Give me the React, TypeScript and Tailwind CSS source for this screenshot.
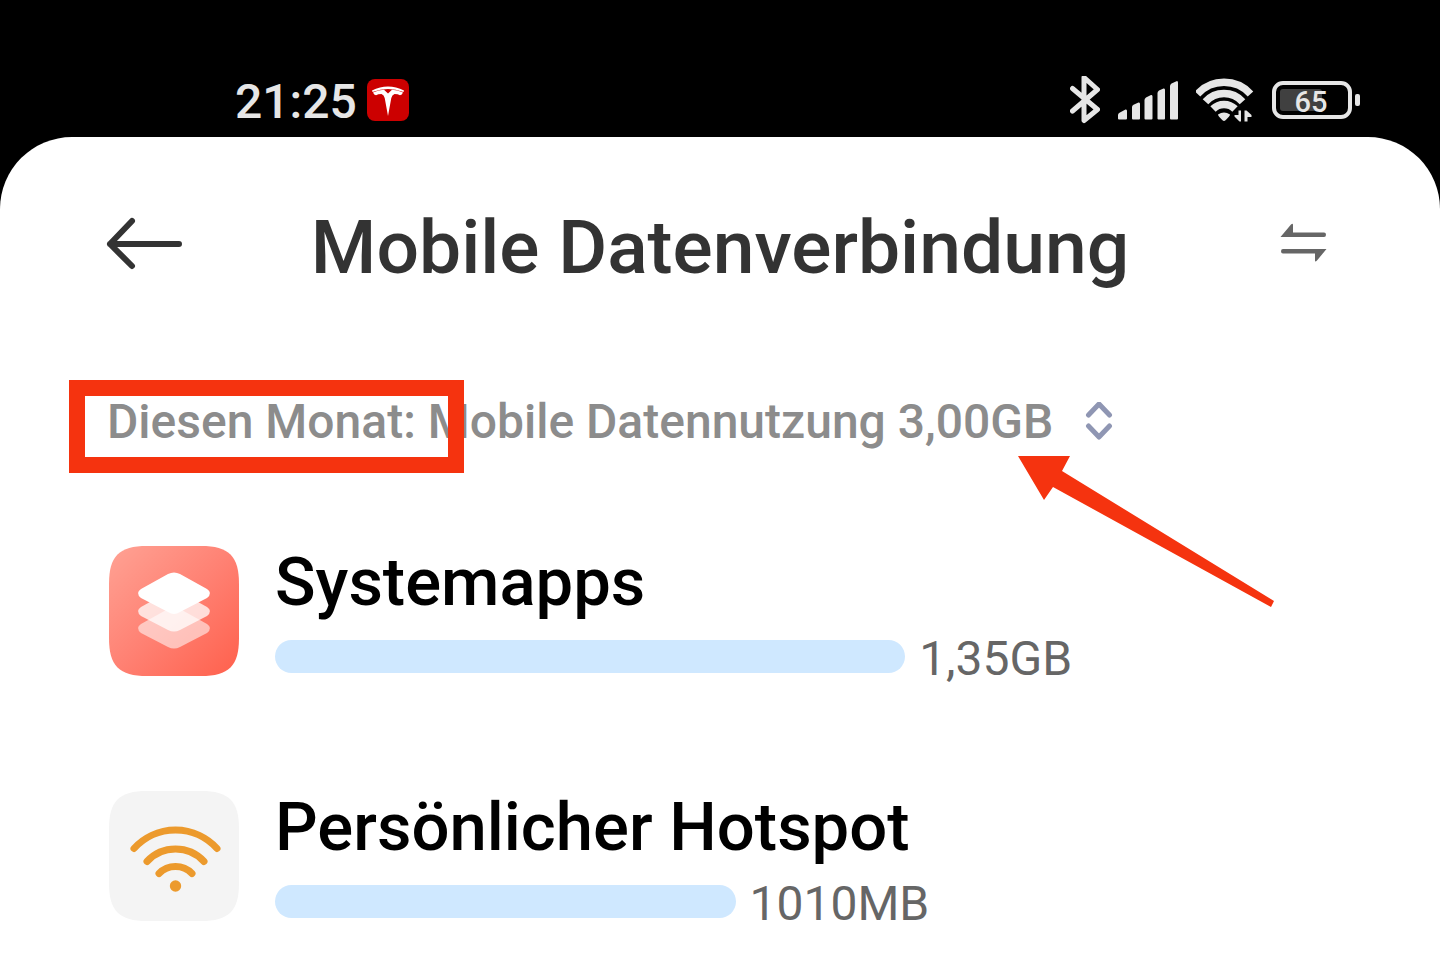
import React from "react";

interface AppUsage {
  id: string;
  name: string;
  usage: string;
  usedMb: number;
  icon: React.ReactNode;
}

// Amount of data that would fill the whole row
const FULL_ROW_MB = 2316;

const TeslaIcon = () => (
  <svg viewBox="0 0 42 42" className="w-[42px] h-[42px]" aria-hidden="true">
    <rect width="42" height="42" rx="8" fill="#cc0000" />
    <path d="M5 11.5Q21 3.5 37 11.5L36.5 13Q21 7 5.5 13Z" fill="#fff" />
    <path
      d="M6 13.5Q11.500 10.800 17 10.800L21 14.500L25 10.800Q30.500 10.800 36 13.500Q35 16 33 16.300Q31 15 27.500 15Q25 16 24.300 19L21 37L17.700 19Q17 16 14.500 15Q11 15 9 16.300Q7 16 6 13.500Z"
      fill="#fff"
    />
  </svg>
);

const BluetoothIcon = () => (
  <svg viewBox="0 0 30 48" className="w-[30px] h-12" fill="none" aria-label="Bluetooth">
    <path
      d="M2.500 12.500L27.500 33.500L14 44.500V1.500L27.500 13.500L2.500 35"
      stroke="#e6e6e6"
      strokeWidth="5"
      strokeLinecap="round"
      strokeLinejoin="round"
    />
  </svg>
);

const SignalIcon = () => (
  <svg viewBox="0 0 60 48" className="w-[60px] h-12" fill="#e6e6e6" aria-label="Mobilfunk">
    <path d="M0 39Q0 37.500 1.500 36.700L7.500 33.500Q9 33 9 35V42.500Q9 43.500 8 43.500H1Q0 43.500 0 42.500Z" />
    <path d="M14 31Q14 29.500 15.500 28.700L20.500 26.500Q22 26 22 28V42.500Q22 43.500 21 43.500H15Q14 43.500 14 42.500Z" />
    <path d="M26.500 24Q26.500 22.500 28 21.500L33 19Q34.500 18.500 34.500 20.500V42.500Q34.500 43.500 33.500 43.500H27.500Q26.500 43.500 26.500 42.500Z" />
    <path d="M39.500 17Q39.500 15.500 41 14.500L45.500 12.500Q47 12 47 14V42.500Q47 43.500 46 43.500H40.500Q39.500 43.500 39.500 42.500Z" />
    <path d="M52 10Q52 8.500 53.500 7.500L58.500 5.200Q60 4.700 60 6.700V42.500Q60 43.500 59 43.500H53Q52 43.500 52 42.500Z" />
  </svg>
);

const StatusWifiIcon = () => (
  <svg viewBox="1 0 58 48" className="w-[58px] h-12" fill="none" aria-label="WLAN">
    <g stroke="#e6e6e6" strokeWidth="7.500">
      <path d="M2.500 18A36 36 0 0 1 55.500 18" />
      <path d="M10.500 25.700A25 25 0 0 1 47.500 25.700" />
      <path d="M18 33A15.500 15.500 0 0 1 40 33" />
    </g>
    <path d="M23 38.500Q29 34.500 35 38.500Q35 40 30.500 44.300Q29 45.500 27.500 44.300Q23 40 23 38.500Z" fill="#e6e6e6" />
    {/* Traffic arrows, cut out of the arcs by a black edge */}
    <path d="M43.500 34.500H46V45.500H44.500L39.500 40.500V39H43.500Z" stroke="#000" strokeWidth="3" />
    <path d="M49.500 34.500H51.500L56.500 39V41H52.500V45.500H49.500Z" stroke="#000" strokeWidth="3" />
    <path d="M43.500 34.500H46V45.500H44.500L39.500 40.500V39H43.500Z" fill="#e6e6e6" />
    <path d="M49.500 34.500H51.500L56.500 39V41H52.500V45.500H49.500Z" fill="#e6e6e6" />
  </svg>
);

const Battery = ({ level }: { level: number }) => (
  <div className="flex items-center gap-[3px]">
    <div className="relative w-20 h-[38px] border-4 border-[#e6e6e6] rounded-[11px] p-1">
      <div className="h-full rounded-[3px] bg-[#404040]" style={{ width: `${level}%` }} />
      <span className="absolute inset-0 flex items-center justify-center text-[29px] leading-[30px] font-medium text-[#e6e6e6] pt-1 pr-0.5">
        {level}
      </span>
    </div>
    <div className="w-[5px] h-3 rounded-[2px] bg-[#e6e6e6]" />
  </div>
);

const SystemAppsIcon = () => (
  <svg viewBox="0 0 130 130" className="w-[130px] h-[130px] shrink-0" aria-hidden="true">
    <defs>
      <linearGradient id="coral" x1="0" y1="0" x2="1" y2="1">
        <stop offset="0" stopColor="#ffa294" />
        <stop offset="0.500" stopColor="#ff8173" />
        <stop offset="1" stopColor="#ff604c" />
      </linearGradient>
    </defs>
    <path
      d="M38 0H92C120 0 130 10 130 38V92C130 120 120 130 92 130H38C10 130 0 120 0 92V38C0 10 10 0 38 0Z"
      fill="url(#coral)"
    />
    <g fill="#fff">
      <path opacity="0.550" d="M59 63Q65 60 71 63L98 78Q104 82 98 87L71 101Q65 104 59 101L32 87Q26 82 32 78Z" />
      <path opacity="0.750" d="M59 46Q65 43 71 46L98 61Q104 65 98 70L71 84Q65 87 59 84L32 70Q26 65 32 61Z" />
      <path d="M59 28Q65 25 71 28L98 43Q104 47 98 52L71 66Q65 70 59 66L32 52Q26 47 32 43Z" />
    </g>
  </svg>
);

const HotspotIcon = () => (
  <svg viewBox="0 0 130 130" className="w-[130px] h-[130px] shrink-0" fill="none" aria-hidden="true">
    <path
      d="M38 0H92C120 0 130 10 130 38V92C130 120 120 130 92 130H38C10 130 0 120 0 92V38C0 10 10 0 38 0Z"
      fill="#f4f4f4"
    />
    <g stroke="#ec9a2d" strokeWidth="7" strokeLinecap="round">
      <path d="M25 57.500A56 56 0 0 1 108 57.500" />
      <path d="M38 70.500A39 39 0 0 1 95 70.500" />
      <path d="M50 82.500A23 23 0 0 1 83 82.500" />
    </g>
    <circle cx="66.500" cy="95" r="5.700" fill="#ec9a2d" />
  </svg>
);

const apps: AppUsage[] = [
  { id: "system", name: "Systemapps", usage: "1,35GB", usedMb: 1382, icon: <SystemAppsIcon /> },
  { id: "hotspot", name: "Persönlicher Hotspot", usage: "1010MB", usedMb: 1010, icon: <HotspotIcon /> },
];

export default function App() {
  return (
    <div className="min-h-screen flex flex-col bg-black font-['Roboto',sans-serif]">
      {/* Status bar */}
      <div className="flex items-center justify-between pt-[76px] pb-[13px] pl-[235px] pr-20">
        <div className="flex items-center gap-2.5 h-12">
          <span className="text-[48px] leading-[52px] font-medium text-[#e6e6e6] pt-1">21:25</span>
          <TeslaIcon />
        </div>
        <div className="flex items-center gap-[18px]">
          <BluetoothIcon />
          <SignalIcon />
          <StatusWifiIcon />
          <Battery level={65} />
        </div>
      </div>

      <main className="flex-1 bg-white rounded-t-[72px] pt-[66px] pb-10">
        {/* Header */}
        <header className="flex items-center justify-between px-[106px]">
          <button type="button" aria-label="Zurück" className="w-[76px]">
            <svg viewBox="0 0 76 60" className="w-[76px] h-[60px]" fill="none">
              <path
                d="M26 4L4 27L26 49M4 27H73"
                stroke="#333333"
                strokeWidth="6"
                strokeLinecap="round"
                strokeLinejoin="round"
              />
            </svg>
          </button>
          <h1 className="text-[75px] leading-[88px] font-medium text-[#333333] whitespace-nowrap">
            Mobile Datenverbindung
          </h1>
          <button type="button" aria-label="SIM wechseln" className="w-[76px]">
            <svg viewBox="0 0 76 60" className="w-[76px] h-[60px]" fill="#666666">
              <path d="M22.500 20L33 7.500Q35 6 35 8V15.500H66Q68 15.500 68 17.700Q68 20 66 20Z" />
              <path d="M68.500 32L59 43.500Q57 45.500 57 43.500V36.500H25Q23 36.500 23 34.300Q23 32 25 32Z" />
            </svg>
          </button>
        </header>

        {/* Period and type of usage */}
        <div className="relative mt-[99px] px-[107px]">
          <button
            type="button"
            className="flex items-center gap-8 text-[48px] leading-[64px] font-medium text-[#8c8c8c] whitespace-nowrap"
          >
            Diesen Monat: Mobile Datennutzung 3,00GB
            <svg viewBox="0 0 28 40" className="w-7 h-10" fill="none">
              <path
                d="M3.500 13L14 2L24.500 13M3.500 24L14 35L24.500 24"
                stroke="#8f96b3"
                strokeWidth="5"
                strokeLinecap="round"
                strokeLinejoin="round"
              />
            </svg>
          </button>

          {/* Highlights */}
          <div className="absolute left-[69px] -top-2.5 w-[395px] h-[93px] border-[16px] border-[#f5330f] pointer-events-none" />
          <svg
            viewBox="0 0 256 152"
            className="absolute left-[1018px] top-[66px] w-64 h-[152px] pointer-events-none"
            aria-hidden="true"
          >
            <path d="M0 0H52L44 15L256 145L253 151L35 31L26 44Z" fill="#f5330f" />
          </svg>
        </div>

        {/* App list */}
        <ul className="flex flex-col gap-[105px] mt-[92px] px-[109px]">
          {apps.map((app) => (
            <li key={app.id} className="flex items-start gap-9">
              {app.icon}
              <div className="flex-1">
                <h2 className="text-[67px] leading-[72px] font-medium text-black whitespace-nowrap">{app.name}</h2>
                <div className="flex items-start gap-3.5 mt-3">
                  <div
                    className="h-[33px] mt-2.5 rounded-full bg-[#cfe8ff]"
                    style={{ width: `${(app.usedMb / FULL_ROW_MB) * 100}%` }}
                  />
                  <span className="text-[48px] leading-[58px] text-[#666666] -mb-0.5">{app.usage}</span>
                </div>
              </div>
            </li>
          ))}
        </ul>
      </main>
    </div>
  );
}
